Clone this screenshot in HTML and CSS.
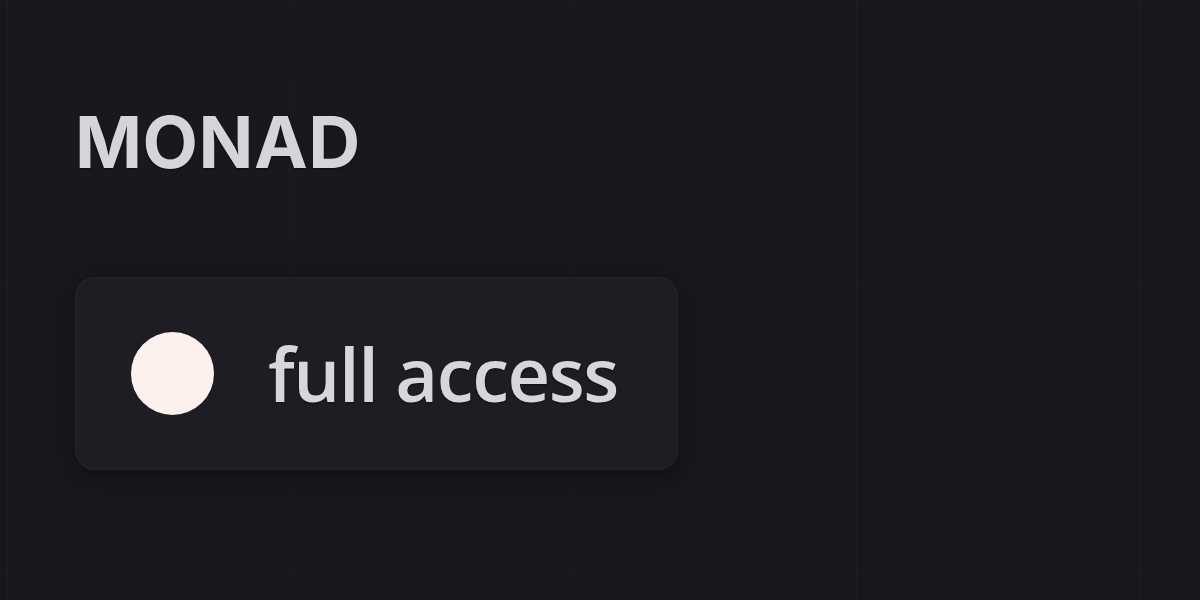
FILE: index.html
```html
<!DOCTYPE html>
<html lang="en">
<head>
    <meta charset="UTF-8">
    <title>Monad</title>
    <link rel="stylesheet" href="styles.css">
</head>
<body>
    <main class="page">
        <div class="brand-box">
            <h1 class="brand">MONAD</h1>
        </div>

        <div class="access-card">
            <span class="access-dot"></span>
            <span class="access-label">full access</span>
        </div>
    </main>
</body>
</html>
```

FILE: styles.css
```css
html, body {
    margin: 0;
    padding: 0;
}
body {
    background-color: #18171d;
    background-image:
        linear-gradient(to right, rgba(255, 255, 255, 0.018) 1px, transparent 1px),
        linear-gradient(to bottom, rgba(255, 255, 255, 0.014) 1px, transparent 1px);
    background-size: 283px 285px;
    background-position: 7px 0, 0 0;
    min-height: 100vh;
    overflow: hidden;
}
.page {
    display: flex;
    flex-direction: column;
    align-items: flex-start;
    padding: 0 0 0 75px;
}
.brand-box {
    margin: 84px 0 0 -12px;
    padding: 22px 26px 59px 12px;
    border-radius: 28px;
    background: rgba(255, 255, 255, 0.008);
}
.brand {
    margin: 0;
    font-family: Inter, "Liberation Sans", sans-serif;
    font-weight: 700;
    font-size: 72px;
    line-height: 72px;
    color: #d5d5d9;
    letter-spacing: 0.5px;
    text-shadow: 0 1px 2px rgba(0, 0, 0, 0.5);
}
.access-card {
    margin-top: 40px;
    display: flex;
    align-items: center;
    gap: 54px;
    height: 193px;
    padding: 0 59px 0 55px;
    box-sizing: border-box;
    background: #1e1d23;
    border: 1px solid rgba(255, 255, 255, 0.035);
    border-radius: 20px;
    box-shadow: 0 6px 18px rgba(0, 0, 0, 0.35);
}
.access-dot {
    width: 83px;
    height: 83px;
    border-radius: 50%;
    background: #fcf1ed;
    flex-shrink: 0;
}
.access-label {
    font-family: "Open Sans", "Noto Sans", sans-serif;
    font-weight: 600;
    font-size: 74px;
    line-height: 1;
    letter-spacing: -1.4px;
    color: #d7d7db;
    text-shadow: 0 1px 2px rgba(0, 0, 0, 0.5);
}
```
